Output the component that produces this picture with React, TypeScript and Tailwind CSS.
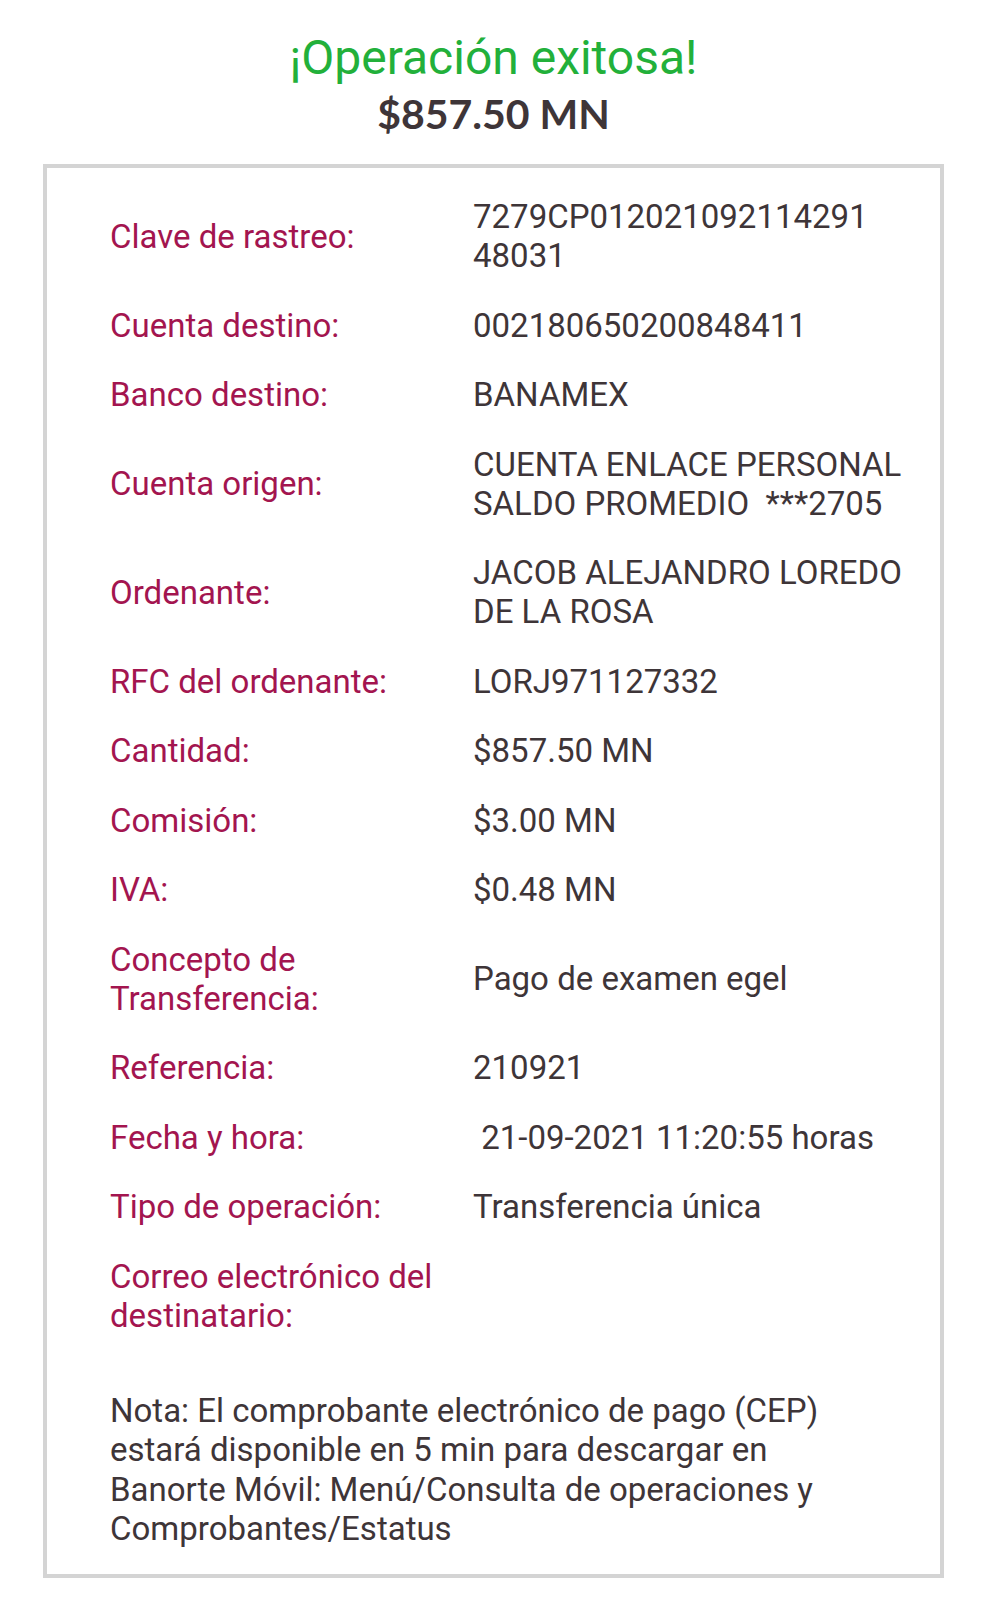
import React from 'react';

type Row = { label: React.ReactNode; value?: React.ReactNode };

const rows: Row[] = [
    { label: 'Clave de rastreo:', value: <>7279CP012021092114291<br />48031</> },
    { label: 'Cuenta destino:', value: '002180650200848411' },
    { label: 'Banco destino:', value: 'BANAMEX' },
    { label: 'Cuenta origen:', value: <>CUENTA ENLACE PERSONAL<br />SALDO PROMEDIO  ***2705</> },
    { label: 'Ordenante:', value: <>JACOB ALEJANDRO LOREDO<br />DE LA ROSA</> },
    { label: 'RFC del ordenante:', value: 'LORJ971127332' },
    { label: 'Cantidad:', value: '$857.50 MN' },
    { label: 'Comisión:', value: '$3.00 MN' },
    { label: 'IVA:', value: '$0.48 MN' },
    { label: <>Concepto de<br />Transferencia:</>, value: 'Pago de examen egel' },
    { label: 'Referencia:', value: '210921' },
    { label: 'Fecha y hora:', value: ' 21-09-2021 11:20:55 horas' },
    { label: 'Tipo de operación:', value: 'Transferencia única' },
    { label: <>Correo electrónico del<br />destinatario:</> },
];

const App: React.FC = () => {
    return (
        <div className="min-h-screen bg-white font-['Roboto',sans-serif]">
            {/* Header */}
            <div className="pt-[30px] text-center">
                <h1 className="text-[48px] leading-[56px] text-[#22b03a]">¡Operación exitosa!</h1>
                <p className="mt-[3px] font-['Lato',sans-serif] font-bold text-[41px] leading-[50px] text-[#3e3538]">$857.50 MN</p>
            </div>

            {/* Receipt card */}
            <div className="mx-[43px] mt-[25px] border-4 border-[#d4d4d4] pl-[63px] pr-4 pt-[29px] pb-[25px]">
                <div className="grid grid-cols-[363px_1fr] items-center gap-y-[30.5px] text-[33px] leading-[39px]">
                    {rows.map((r, i) => (
                        <React.Fragment key={i}>
                            <div className="text-[#a3154f]">{r.label}</div>
                            <div className="whitespace-pre-wrap text-[#3e3538]">{r.value}</div>
                        </React.Fragment>
                    ))}
                </div>

                <p className="mt-[56px] text-[33px] leading-[39.5px] text-[#3e3538]">
                    Nota: El comprobante electrónico de pago (CEP)<br />
                    estará disponible en 5 min para descargar en<br />
                    Banorte Móvil: Menú/Consulta de operaciones y<br />
                    Comprobantes/Estatus
                </p>
            </div>
        </div>
    );
};

export default App;
